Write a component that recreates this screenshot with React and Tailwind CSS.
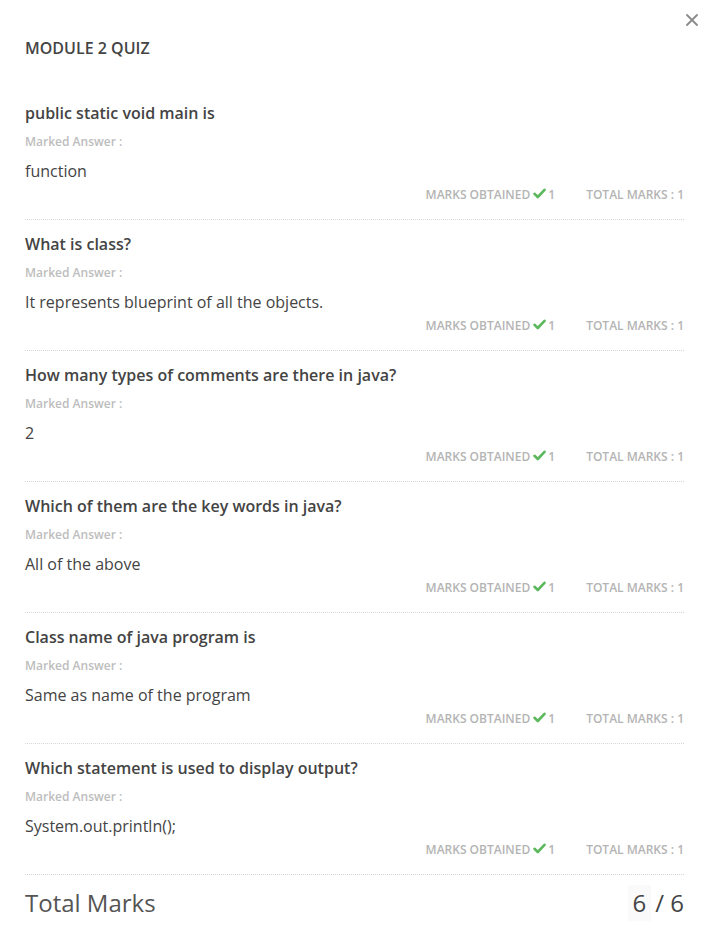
import React from "react";

const items = [
  ["public static void main is", "function"],
  ["What is class?", "It represents blueprint of all the objects."],
  ["How many types of comments are there in java?", "2"],
  ["Which of them are the key words in java?", "All of the above"],
  ["Class name of java program is", "Same as name of the program"],
  ["Which statement is used to display output?", "System.out.println();"],
];

function Check() {
  return (
    <svg width="13" height="11" viewBox="0 0 13 11" className="inline-block">
      <path d="M1.5 5.8 L4.8 9 L11.5 1.8" fill="none" stroke="#5cb85c" strokeWidth="2.6" strokeLinecap="round" strokeLinejoin="round" />
    </svg>
  );
}

export default function App() {
  return (
    <div className="relative w-[704px] h-[928px] bg-white overflow-hidden text-[#444]" style={{ fontFamily: '"Open Sans", sans-serif' }}>
      <button className="absolute right-[2px] top-[10px] w-[20px] h-[20px] flex items-center justify-center">
        <svg width="12" height="12" viewBox="0 0 12 12">
          <path d="M1 1 L11 11 M11 1 L1 11" stroke="#8a8a8a" strokeWidth="1.8" strokeLinecap="round" />
        </svg>
      </button>
      <div className="pl-[25px] pr-[20px]">
        <h2 className="pt-[37px] text-[16px] leading-[22px] font-semibold text-[#444]">MODULE 2 QUIZ</h2>
        <div className="mt-[43px]">
          {items.map(([q, a], i) => (
            <div key={i} className={`border-b border-dotted border-[#d6d6d6] ${i === 0 ? "pt-0" : "pt-[13px]"} pb-[15px]`}>
              <div className="text-[16px] leading-[22px] font-semibold text-[#444]">{q}</div>
              <div className="mt-[10px] text-[12px] leading-[16px] font-semibold text-[#bdbdbd]">Marked Answer :</div>
              <div className="mt-[10px] text-[16px] leading-[22px] text-[#444]">{a}</div>
              <div className="mt-[4px] flex justify-end items-center text-[12px] leading-[18px] font-semibold text-[#b4b4b4] uppercase">
                <span>Marks Obtained</span>
                <span className="ml-[3px] mr-[2px] relative top-[-2px]"><Check /></span>
                <span>1</span>
                <span className="ml-[31px]">Total Marks : 1</span>
              </div>
            </div>
          ))}
        </div>
        <div className="flex items-center justify-between pt-[10px]">
          <div className="text-[24px] leading-[32px] text-[#555]">Total Marks</div>
          <div className="flex items-center text-[24px] leading-[32px] text-[#444]">
            <span className="bg-[#fafafa] px-[5px] leading-[36px]">6</span>
            <span className="ml-[4px]">/ 6</span>
          </div>
        </div>
      </div>
    </div>
  );
}
